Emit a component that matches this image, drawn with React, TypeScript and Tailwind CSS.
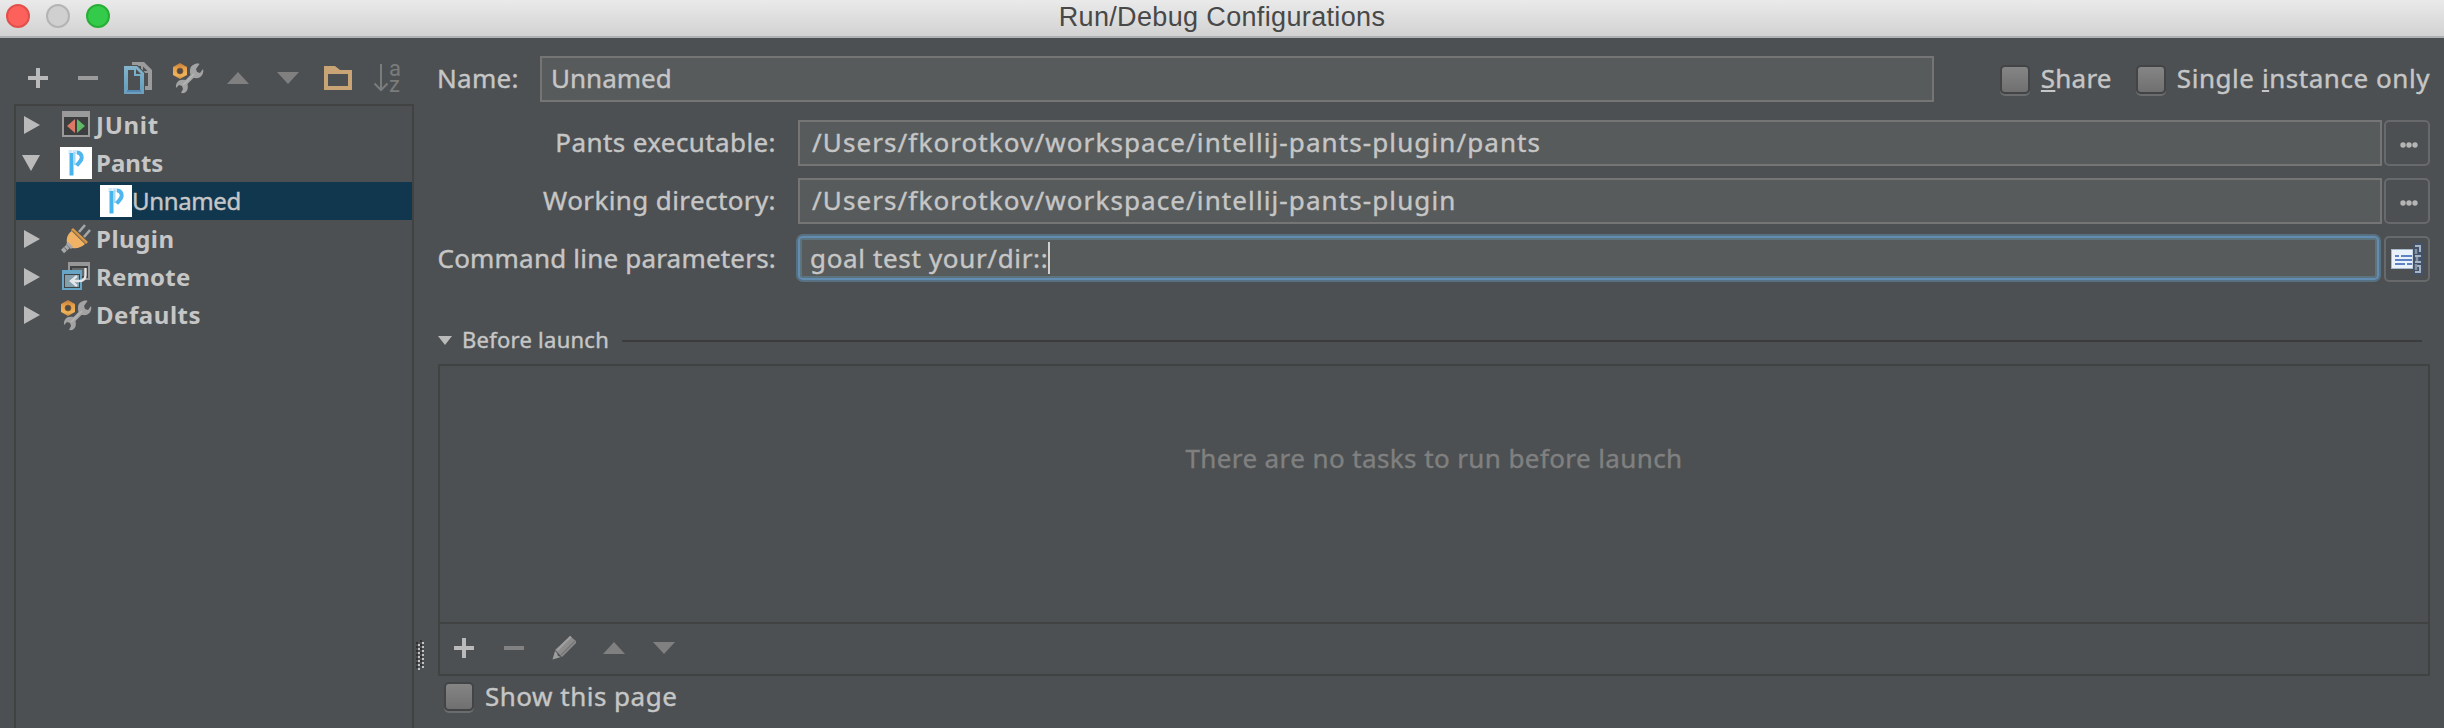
import type { ReactNode } from "react";

const ICON = "h-8 w-8 shrink-0";

function PlusIcon() {
  return (
    <svg className={ICON} viewBox="0 0 32 32" fill="#bababa">
      <path d="M14 6h4v8h8v4h-8v8h-4v-8H6v-4h8z" />
    </svg>
  );
}

function MinusIcon({ color }: { color: string }) {
  return (
    <svg className={ICON} viewBox="0 0 32 32">
      <rect x="6" y="14" width="20" height="4" fill={color} />
    </svg>
  );
}

function UpIcon() {
  return (
    <svg className={ICON} viewBox="0 0 32 32">
      <path d="M5 22L16 10l11 12z" fill="#808080" />
    </svg>
  );
}

function DownIcon() {
  return (
    <svg className={ICON} viewBox="0 0 32 32">
      <path d="M5 10L16 22l11-12z" fill="#808080" />
    </svg>
  );
}

function CopyIcon() {
  return (
    <svg className={ICON} viewBox="0 0 32 32">
      <defs>
        <linearGradient id="copy-front" x1="0" y1="0" x2="0" y2="1">
          <stop offset="0" stopColor="#85b4cb" />
          <stop offset="0.75" stopColor="#68a2c1" />
          <stop offset="1" stopColor="#6f9fbd" />
        </linearGradient>
      </defs>
      <path d="M10 0h12l8 8v20h-7v-4h3V11h-7V4h-9z" fill="#9b9b9b" />
      <path d="M21 4.500v4.500h4.500z" fill="#4c5052" />
      <path d="M1 3h14.500L23 10.500V32H1z" fill="#4c5052" />
      <path d="M2 4h13l7 7v21H2z" fill="url(#copy-front)" />
      <path d="M6 8h6v6h6v14H6z" fill="#4c5052" />
      <path d="M14 7v5h5z" fill="#4c5052" />
      <path d="M5 29h14" stroke="#4d82ac" strokeWidth="1.500" />
    </svg>
  );
}

function WrenchIcon() {
  return (
    <svg className={ICON} viewBox="0 0 32 32">
      <defs>
        <linearGradient id="nut" x1="0" y1="0" x2="0" y2="1">
          <stop offset="0" stopColor="#c2793a" />
          <stop offset="0.35" stopColor="#e8a24b" />
          <stop offset="0.75" stopColor="#eeb35b" />
          <stop offset="1" stopColor="#cf8d3e" />
        </linearGradient>
      </defs>
      <path
        d="M18 8c0-3 2-5 5-6 2-.600 4-.600 4.500 0L24 7l1 3 3 1 3-4c1 3-.500 7-3.500 8.500-2 1-4 .500-6 .500l-6 6c.500 2 .500 5-.500 6.500-1 2-3 3-6 2.500l2-4-1-3-3-1-3 3c-.500-3 .500-6 3-7.500 2-1 4-1 6.500-.500l5-5c-.500-1.500-.500-3-.500-5z"
        fill="#a3a3a3"
      />
      <path d="M22 12L11 23" stroke="#b6b6b6" strokeWidth="1.500" />
      <path d="M8 1l7 4v8l-7 4-7-4V5z" fill="url(#nut)" />
      <circle cx="8" cy="9" r="3" fill="#4a4b4a" stroke="#8a5a2a" strokeWidth="0.800" />
    </svg>
  );
}

function FolderIcon() {
  return (
    <svg className={ICON} viewBox="0 0 32 32">
      <path d="M2 4h11l5 4h12v20H2zM6 12v12h20V12z" fill="#c9a575" fillRule="evenodd" />
    </svg>
  );
}

function SortIcon() {
  return (
    <svg className="h-8 w-8 shrink-0 overflow-visible" viewBox="0 0 32 32">
      <path d="M9 2v26M2.500 21.500L9 28l6.500-6.500" fill="none" stroke="#7b7c7c" strokeWidth="2" />
      <text x="17" y="14" fontSize="22" fill="#7b7c7c" className="font-[Roboto,sans-serif]">a</text>
      <text x="17" y="30" fontSize="22" fill="#7b7c7c" className="font-[Roboto,sans-serif]">z</text>
    </svg>
  );
}

function PencilIcon() {
  return (
    <svg className={ICON} viewBox="0 0 32 32">
      <path d="M22 4l6 5v2L14 25l-7-7z" fill="#8c8c8c" />
      <path d="M23 4.500L9 18.500" stroke="#a0a0a0" strokeWidth="2" />
      <path d="M27 9L13 23" stroke="#777" strokeWidth="1.500" />
      <path d="M7 19l-2.500 8.500L13 25l-3-1-1-3z" fill="#9d9d9d" />
    </svg>
  );
}

function JUnitIcon() {
  return (
    <svg className={ICON} viewBox="0 0 32 32">
      <rect x="2" y="2" width="28" height="26" fill="#9a9a9a" />
      <rect x="4" y="8" width="24" height="18" fill="#3d3e3f" />
      <path d="M15 10v14l-8-7z" fill="#dc7866" />
      <path d="M17 10v14l8-7z" fill="#5fb865" />
    </svg>
  );
}

function PantsIcon() {
  return (
    <svg className={ICON} viewBox="0 0 32 32">
      <rect width="32" height="32" fill="#fff" />
      <path d="M8.500 3h4v4h-4zM13 3h4v4h-4z" fill="#cfe9f9" />
      <path d="M11.500 6v22.500" stroke="#45b4ee" strokeWidth="4" />
      <path d="M14.500 5v13" stroke="#a5d8f5" strokeWidth="2" />
      <path d="M17 5.500c3 0 5 2.500 4.700 5.500-.200 3-2.700 4.500-5.200 7.500" fill="none" stroke="#4fb6ee" strokeWidth="4" />
    </svg>
  );
}

function PluginIcon() {
  return (
    <svg className={ICON} viewBox="0 0 32 32">
      <path d="M19 9l6-7M24 14l6-7" stroke="#a5a7a8" strokeWidth="2.600" />
      <path d="M12 6l15 14" stroke="#d79a4b" strokeWidth="3" />
      <path d="M11.500 8L25 21c-3 3-8 5-13 4l-5-5c-1-5 1-9 4.500-12z" fill="#f0b365" />
      <path d="M12.500 7.500L25.500 20" stroke="#a8763a" strokeWidth="1" />
      <path d="M7 20l5 5" stroke="#a5a7a8" strokeWidth="3" />
      <path d="M8 23.500l-5.500 5" stroke="#a5a7a8" strokeWidth="4.500" />
      <path d="M4.500 24.500l3 3.500" stroke="#5c5f60" strokeWidth="1" />
    </svg>
  );
}

function RemoteIcon() {
  return (
    <svg className={ICON} viewBox="0 0 32 32">
      <path d="M8 1h22v18H8z" fill="#979797" />
      <path d="M10 5h18v12H10z" fill="#3f4142" />
      <path d="M12 7h14v8H12z" fill="#66696a" />
      <path d="M2 9h20v20H2z" fill="#66a5c6" />
      <path d="M4 13h16v14H4z" fill="#3f4346" />
      <path d="M5 14h14v12H5z" fill="#839fac" />
      <path d="M25.500 7v7c0 4-2 6-6 6h-8M17 15l-6 5 6 5" fill="none" stroke="#e4e6e7" strokeWidth="2.400" />
    </svg>
  );
}

function ExpandEditorIcon() {
  return (
    <svg className={ICON} viewBox="0 0 32 32">
      <rect x="0" y="6" width="22" height="20" fill="#e9f2fa" />
      <rect x="0.500" y="6.500" width="21.500" height="19" fill="none" stroke="#a9bacb" />
      <path d="M4 13h4M10 13h11M4 17h17M4 21h10M16 21h5" stroke="#5f82c4" strokeWidth="2" />
      <rect x="22" y="0" width="10" height="32" fill="#43526b" />
      <path d="M24 3h6M29 3v6M24 13h6M24 19h6M24 29h6M25 23h5M29 23v6" stroke="#aab4c0" strokeWidth="2" />
      <path d="M25 6v5M26 14v4M25 21v6" stroke="#8592a3" strokeWidth="2.500" />
    </svg>
  );
}

function TreeArrow({ open }: { open: boolean }) {
  return (
    <svg className="h-[18px] w-[18px] shrink-0" viewBox="0 0 18 18">
      <path d={open ? "M0 1h18L9 17z" : "M2 0v18l16-9z"} fill="#bababa" />
    </svg>
  );
}

function TreeGroup({ icon, label, spacing, open = false }: { icon: ReactNode; label: string; spacing: string; open?: boolean }) {
  return (
    <div className="flex h-[38px] items-center pl-[6px]">
      <TreeArrow open={open} />
      <div className="ml-5 flex">{icon}</div>
      <span className={`ml-1 text-2xl leading-none font-bold ${spacing}`}>{label}</span>
    </div>
  );
}

function Checkbox() {
  return (
    <div className="h-[29px] w-[30px] shrink-0 rounded-[5px] border-2 border-[#434445] bg-linear-to-b from-[#858585] to-[#707070] shadow-[0_2px_0_0_#6a6c6d]" />
  );
}

const TEXT = "[-webkit-text-stroke:0.400px_currentColor]";
const FIELD = "flex h-[46px] items-center border-2 border-[#757575] bg-[#575b5c] pb-[2px]";
const BUTTON = "ml-[2px] flex h-[46px] w-[46px] shrink-0 items-center justify-center rounded-[5px] border-2 border-[#67696a]";

function Dots() {
  return (
    <svg className="mt-1 ml-1 h-[6px] w-[18px]" viewBox="0 0 18 6" fill="#b5b5b5">
      <circle cx="3" cy="3" r="2.700" />
      <circle cx="9" cy="3" r="2.700" />
      <circle cx="15" cy="3" r="2.700" />
    </svg>
  );
}

function PathRow({ label, spacing, value }: { label: string; spacing: string; value: string }) {
  return (
    <div className="flex h-[46px] items-center">
      <span className={`w-[340px] pb-[2px] text-right whitespace-nowrap ${spacing}`}>{label}</span>
      <div className={`ml-[22px] w-[1584px] pl-3 tracking-[1.100px] ${FIELD}`}>{value}</div>
      <div className={BUTTON}>
        <Dots />
      </div>
    </div>
  );
}

function SplitterGrip() {
  const rows = Array.from({ length: 15 }, (_, i) => i);
  return (
    <svg className="h-[30px] w-2" viewBox="0 0 8 30" shapeRendering="crispEdges">
      {rows.map((r) =>
        r % 2 === 0 ? (
          <g key={r}>
            {r > 0 && <rect x="2" y={r * 2} width="2" height="2" fill="#c4c4c4" />}
            {r < 14 && <rect x="4" y={r * 2} width="2" height="2" fill="#2f3132" />}
          </g>
        ) : (
          <g key={r}>
            <rect x="0" y={r * 2} width="2" height="2" fill="#2f3132" />
            <rect x="6" y={r * 2} width="2" height="2" fill="#c4c4c4" />
          </g>
        ),
      )}
    </svg>
  );
}

export default function App() {
  return (
    <div className="flex h-[728px] w-[2444px] flex-col overflow-hidden bg-[#4c5052] font-['Noto_Sans',sans-serif] text-[26px] leading-none text-[#c6c6c6]">
      <header className="grid h-[38px] shrink-0 grid-cols-[1fr_auto_1fr] items-center border-b-2 border-[#aeb0b1] bg-linear-to-b from-[#eaeaea] to-[#d2d2d2]">
        <div className="flex gap-4 pb-1 pl-[6px]">
          <div className="h-6 w-6 rounded-full border-2 border-[#e2504b] bg-[#fd615c]" />
          <div className="h-6 w-6 rounded-full border-2 border-[#b4b4b4] bg-[#d0d0d0]" />
          <div className="h-6 w-6 rounded-full border-2 border-[#28ae35] bg-[#35cb4a]" />
        </div>
        <h1 className="pb-[2px] font-['Liberation_Sans',Arial,sans-serif] text-[27px] tracking-[0.350px] text-[#484848]">
          Run/Debug Configurations
        </h1>
      </header>

      <div className="flex min-h-0 flex-1">
        <aside className="flex w-[414px] flex-col pl-[14px]">
          <div className="flex gap-[18px] pt-6 pb-[10px] pl-2">
            <PlusIcon />
            <MinusIcon color="#9b9b9b" />
            <CopyIcon />
            <WrenchIcon />
            <UpIcon />
            <DownIcon />
            <FolderIcon />
            <SortIcon />
          </div>
          <div className="flex-1 border-2 border-b-0 border-[#414242]">
            <TreeGroup icon={<JUnitIcon />} label="JUnit" spacing="tracking-[0.700px]" />
            <TreeGroup icon={<PantsIcon />} label="Pants" spacing="tracking-[0px]" open />
            <div className="flex h-[38px] items-center bg-[#10374e] pl-[84px]">
              <PantsIcon />
              <span className={`text-2xl leading-none tracking-[-0.350px] ${TEXT}`}>Unnamed</span>
            </div>
            <TreeGroup icon={<PluginIcon />} label="Plugin" spacing="tracking-[0.500px]" />
            <TreeGroup icon={<RemoteIcon />} label="Remote" spacing="tracking-[0.200px]" />
            <TreeGroup icon={<WrenchIcon />} label="Defaults" spacing="tracking-[0.550px]" />
          </div>
        </aside>

        <div className="w-[22px] shrink-0 pt-[602px] pl-[2px]">
          <SplitterGrip />
        </div>

        <main className={`flex w-[1994px] flex-col pt-[18px] ${TEXT}`}>
          <div className="flex items-center">
            <span className="w-[104px] pb-[2px] pl-px tracking-[0.300px]">Name:</span>
            <div className={`w-[1394px] pl-[9px] ${FIELD}`}>Unnamed</div>
            <div className="ml-[66px] flex items-center">
              <Checkbox />
              <span className="ml-[11px] w-[95px] pb-[2px] tracking-[0.200px]">
                <span className="underline decoration-2 underline-offset-[2px]">S</span>hare
              </span>
              <Checkbox />
              <span className="ml-[11px] pb-[2px] tracking-[0.550px] whitespace-nowrap">
                Single <span className="underline decoration-2 underline-offset-[2px]">i</span>nstance only
              </span>
            </div>
          </div>

          <div className="mt-[18px] flex flex-col gap-3">
            <PathRow
              label="Pants executable:"
              spacing="tracking-[0.400px]"
              value="/Users/fkorotkov/workspace/intellij-pants-plugin/pants"
            />
            <PathRow
              label="Working directory:"
              spacing="tracking-[0.400px]"
              value="/Users/fkorotkov/workspace/intellij-pants-plugin"
            />
            <div className="flex h-[46px] items-start">
              <span className="flex h-[46px] w-[340px] items-center justify-end pb-[2px] tracking-[0.200px] whitespace-nowrap">
                Command line parameters:
              </span>
              <div className="mr-[3px] ml-[22px] flex h-11 w-[1581px] items-center rounded-[5px] border-2 border-[#628cb0] bg-[#575b5c] pl-[10px] tracking-[0.650px] shadow-[0_0_0_2px_#587182,inset_0_0_0_2px_#5c7380]">
                <span>goal test your/dir::</span>
                <span className="h-8 w-[2px] bg-[#d0d0d0]" />
              </div>
              <div className={BUTTON}>
                <ExpandEditorIcon />
              </div>
            </div>
          </div>

          <div className="mt-[46px] flex h-6 items-center pl-[2px]">
            <svg className="h-[9px] w-[14px]" viewBox="0 0 14 9">
              <path d="M0 0h14L7 9z" fill="#bababa" />
            </svg>
            <span className="ml-[10px] w-[160px] pb-[2px] text-[22px] tracking-[0.250px]">Before launch</span>
            <div className="mt-[2px] h-[2px] w-[1800px] bg-[#3c3c3c]" />
          </div>

          <section className="mt-3 ml-[2px] flex h-[312px] w-[1992px] flex-col border-2 border-[#414242]">
            <div className="flex-1 pt-[79px] text-center tracking-[0.400px] text-[#808080]">
              There are no tasks to run before launch
            </div>
            <div className="flex h-[52px] items-center gap-[18px] border-t-2 border-[#414242] pb-[2px] pl-2">
              <PlusIcon />
              <MinusIcon color="#828282" />
              <PencilIcon />
              <UpIcon />
              <DownIcon />
            </div>
          </section>

          <div className="mt-[6px] flex items-center pl-2">
            <Checkbox />
            <span className="ml-[11px] pb-[2px] tracking-[0.500px]">Show this page</span>
          </div>
        </main>
      </div>
    </div>
  );
}
